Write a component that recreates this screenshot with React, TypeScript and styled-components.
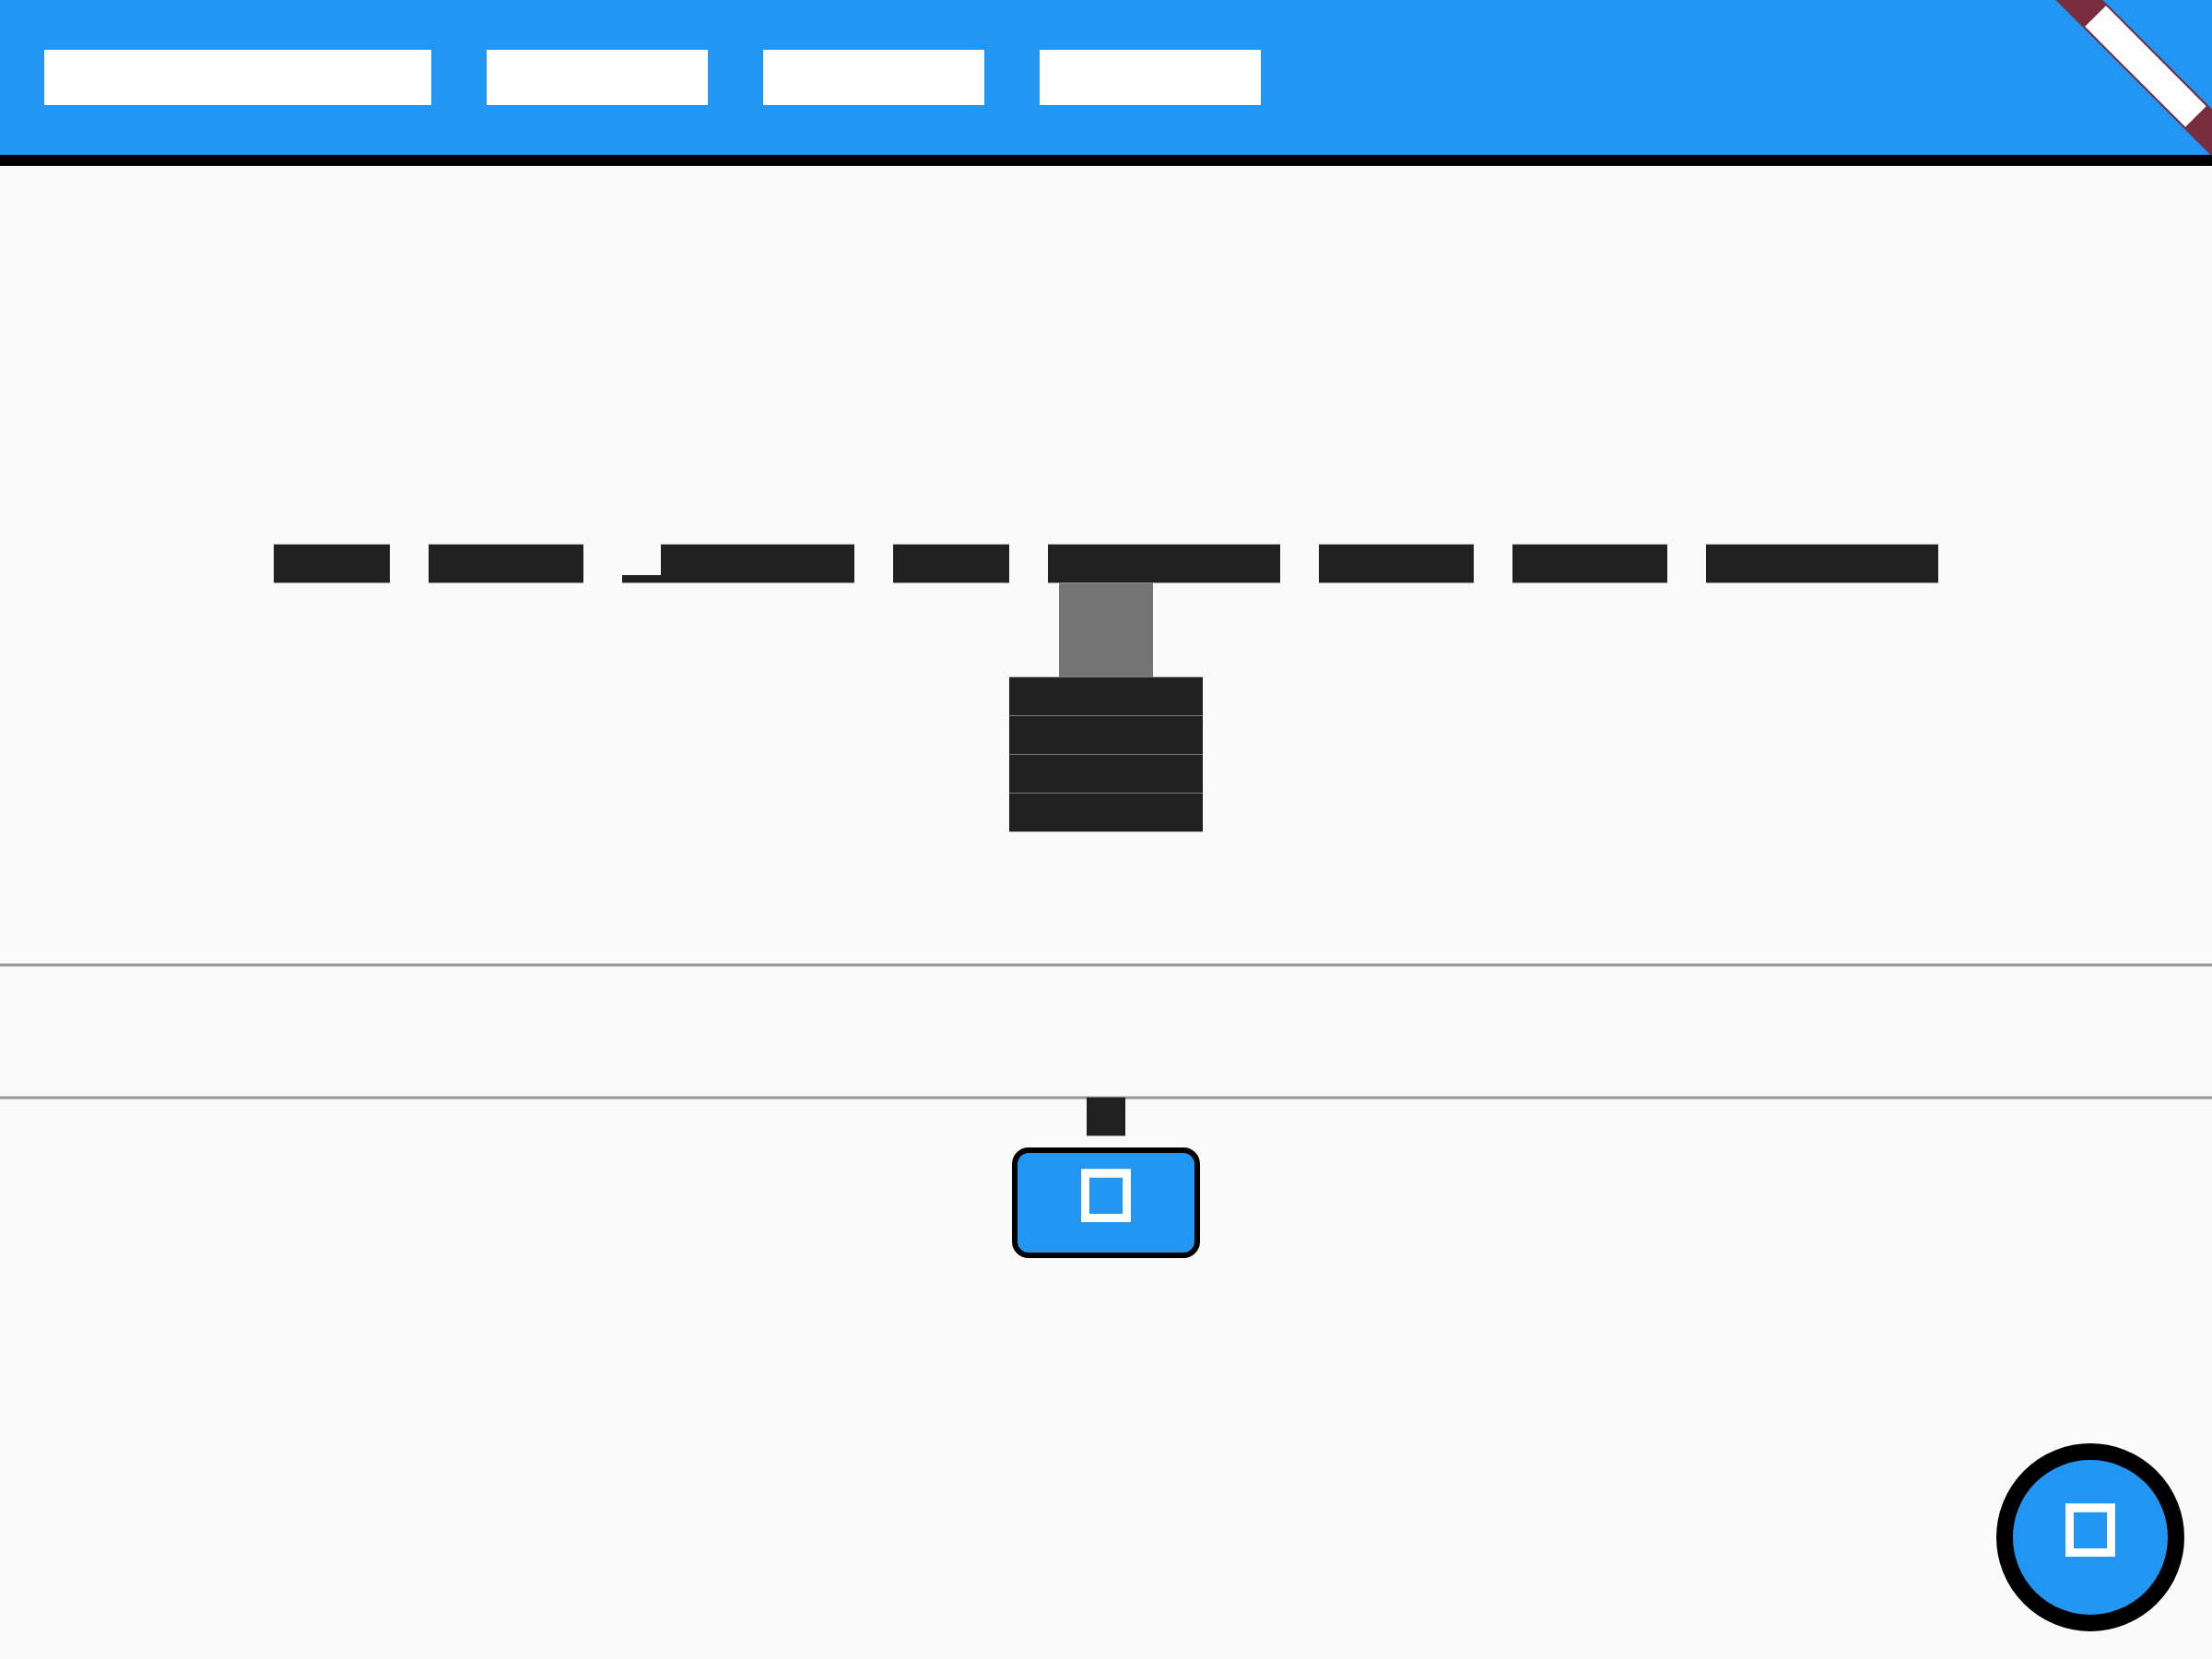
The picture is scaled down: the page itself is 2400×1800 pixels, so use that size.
import React from "react";
import styled, { createGlobalStyle } from "styled-components";

const INK = "#212121";
const INK_EDGE = "rgba(33, 33, 33, 0.36)";
const BLUE = "#2196f3";

const GlobalStyle = createGlobalStyle`
  *, *::before, *::after { box-sizing: border-box; }
  body {
    margin: 0;
    background: #fafafa;
    color: ${INK};
    font-family: Roboto, "Liberation Sans", sans-serif;
  }
`;

const Page = styled.div`
  display: flex;
  flex-direction: column;
  min-height: 100vh;
`;

const AppBar = styled.header`
  position: relative;
  padding: 54px 48px;
  background: ${BLUE};
  border-bottom: 12px solid #000;
`;

const Title = styled.h1`
  display: flex;
  gap: 1em;
  margin: 0;
  font-size: 60px;
`;

const TitleWord = styled.span<{ $chars: number }>`
  width: ${(p) => p.$chars}em;
  height: 1em;
  background: #fff;
`;

const BannerCorner = styled.div`
  position: absolute;
  top: 0;
  right: 0;
  width: 180px;
  height: 180px;
  overflow: hidden;
  pointer-events: none;
`;

const Ribbon = styled.div`
  position: absolute;
  top: 54px;
  right: -48px;
  display: flex;
  align-items: center;
  justify-content: center;
  width: 240px;
  height: 36px;
  background: linear-gradient(rgba(183, 28, 28, 0.627), rgba(183, 28, 28, 0.627)), rgba(0, 0, 0, 0.498);
  transform: rotate(45deg);
`;

const RibbonText = styled.span`
  width: 154px;
  height: 32px;
  background: #fff;
`;

const Body = styled.main`
  flex: 1;
  display: flex;
  flex-direction: column;
  align-items: center;
  justify-content: center;
  padding-bottom: 0;
  font-size: 42px;
`;

const Line = styled.p`
  display: flex;
  justify-content: center;
  gap: 1em;
  margin: 0 0 -1px;
`;

const Word = styled.span`
  display: flex;
  align-items: flex-end;
`;

const Run = styled.span<{ $chars: number; $descender?: boolean }>`
  width: ${(p) => p.$chars}em;
  height: ${(p) => (p.$descender ? 9 : 43)}px;
  background: ${INK};
  background-clip: padding-box;
  border-bottom: 1px solid ${INK_EDGE};
  border-top: ${(p) => (p.$descender ? "0" : `1px solid ${INK_EDGE}`)};
`;

const Swatch = styled.div`
  width: 102px;
  height: 103px;
  margin-bottom: -1px;
  background: #747474;
  background-clip: padding-box;
  border: solid rgba(116, 116, 116, 0.5);
  border-width: 1px 0;
`;

const Field = styled.input`
  width: 100%;
  height: 146px;
  margin: 0 0 -2px;
  padding: 0;
  border: 0;
  border-bottom: 2px solid #989898;
  border-radius: 0;
  box-shadow: 0 1px 0 #c8c8c8, inset 0 -1px 0 #c8c8c8;
  background: transparent;
  color: ${INK};
  font: inherit;
  outline: none;
`;

const IconButton = styled.button`
  display: flex;
  align-items: center;
  justify-content: center;
  padding: 0;
  background: ${BLUE};
  color: #fff;
  cursor: pointer;
`;

const RaisedButton = styled(IconButton)`
  width: 204px;
  height: 120px;
  margin: 13px 0 25px;
  border: 6px solid #000;
  border-radius: 18px;
`;

const FloatingButton = styled(IconButton)`
  position: fixed;
  right: 30px;
  bottom: 30px;
  width: 204px;
  height: 204px;
  border: 18px solid #000;
  border-radius: 50%;
`;

const title = ["Flutter", "Demo", "Home", "Page"];
const message = ["You", "have", "pushed", "the", "button", "this", "many", "times:"];
const rows = [5, 5, 5, 5];

/* A leading "p" only fills the space under the baseline. */
function TextWord({ text }: { text: string }) {
  const low = text.startsWith("p");
  return (
    <Word>
      {low && <Run $chars={1} $descender />}
      <Run $chars={low ? text.length - 1 : text.length} />
    </Word>
  );
}

function BoxIcon() {
  return (
    <svg width="54" height="74" viewBox="0 0 54 74" aria-hidden="true">
      <path fill="currentColor" fillRule="evenodd" d="M0 0.3H54V58H0ZM9 9.7V49H45V9.7Z" />
    </svg>
  );
}

export default function App() {
  return (
    <Page>
      <GlobalStyle />
      <AppBar>
        <Title aria-label={title.join(" ")}>
          {title.map((word) => (
            <TitleWord key={word} $chars={word.length} />
          ))}
        </Title>
        <BannerCorner>
          <Ribbon>
            <RibbonText />
          </Ribbon>
        </BannerCorner>
      </AppBar>
      <Body>
        <Line role="img" aria-label={message.join(" ")}>
          {message.map((word) => (
            <TextWord key={word} text={word} />
          ))}
        </Line>
        <Swatch />
        {rows.map((chars, i) => (
          <Line key={i}>
            <Run $chars={chars} />
          </Line>
        ))}
        <Field type="text" aria-label="First field" />
        <Field type="text" aria-label="Second field" />
        <Line>
          <Run $chars={1} />
        </Line>
        <RaisedButton type="button" aria-label="Submit">
          <BoxIcon />
        </RaisedButton>
      </Body>
      <FloatingButton type="button" aria-label="Increment">
        <BoxIcon />
      </FloatingButton>
    </Page>
  );
}
